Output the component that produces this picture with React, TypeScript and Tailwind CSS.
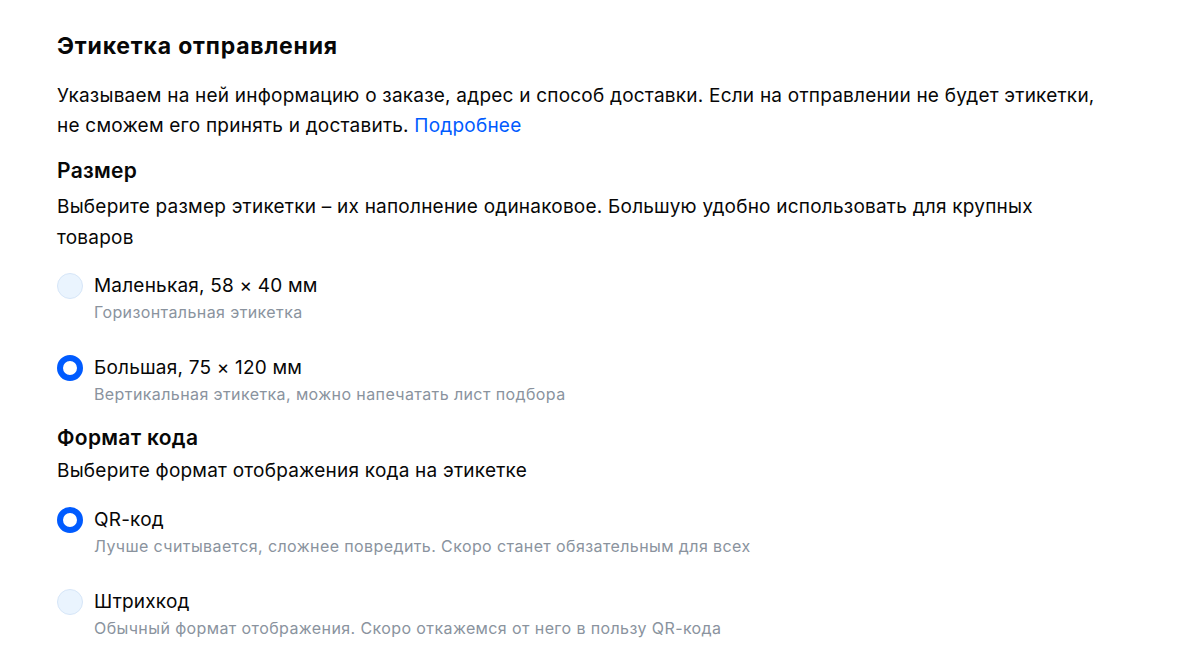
import React from "react";

function Radio({ checked, label, sub }: { checked: boolean; label: string; sub: string }) {
  return (
    <div className="flex items-start gap-[11px]">
      <div className="h-6 flex items-center">
        {checked ? (
          <div className="w-[26px] h-[26px] rounded-full border-[6px] border-[#005bff] bg-white" />
        ) : (
          <div className="w-[26px] h-[26px] rounded-full border border-[#d6e6f8] bg-[#eaf4fe]" />
        )}
      </div>
      <div className="flex flex-col">
        <div className="text-[19px] leading-6 tracking-[0.2px] text-[#070707]">{label}</div>
        <div className="mt-[4px] text-[16px] leading-5 tracking-[0.4px] text-[#8a939e]">{sub}</div>
      </div>
    </div>
  );
}

export default function App() {
  return (
    <div className="w-[1199px] h-[657px] bg-white overflow-hidden" style={{ fontFamily: "Inter, 'Noto Sans', sans-serif" }}>
      <div className="pl-[57px] pt-[32px] w-[1107px] text-[#070707]">
        <h1 className="text-[23px] leading-7 font-bold tracking-[0.8px]">Этикетка отправления</h1>
        <p className="mt-[21px] text-[19px] leading-[30px] tracking-[0.22px]">
          Указываем на ней информацию о заказе, адрес и способ доставки. Если на отправлении не будет этикетки,
          <br />
          не сможем его принять и доставить. <span className="text-[#005bff]">Подробнее</span>
        </p>
        <h2 className="mt-[16px] text-[21px] leading-7 font-semibold tracking-[0.3px]">Размер</h2>
        <p className="mt-[6px] text-[19px] leading-[31px] tracking-[0.22px]">
          Выберите размер этикетки – их наполнение одинаковое. Большую удобно использовать для крупных товаров
        </p>
        <div className="mt-[21px] flex flex-col gap-[34px]">
          <Radio checked={false} label="Маленькая, 58 × 40 мм" sub="Горизонтальная этикетка" />
          <Radio checked={true} label="Большая, 75 × 120 мм" sub="Вертикальная этикетка, можно напечатать лист подбора" />
        </div>
        <h2 className="mt-[20px] text-[21px] leading-7 font-semibold tracking-[0.3px]">Формат кода</h2>
        <p className="mt-[4px] text-[19px] leading-[30px] tracking-[0.22px]">Выберите формат отображения кода на этикетке</p>
        <div className="mt-[22px] flex flex-col gap-[34px]">
          <Radio checked={true} label="QR-код" sub="Лучше считывается, сложнее повредить. Скоро станет обязательным для всех" />
          <Radio checked={false} label="Штрихкод" sub="Обычный формат отображения. Скоро откажемся от него в пользу QR-кода" />
        </div>
      </div>
    </div>
  );
}
